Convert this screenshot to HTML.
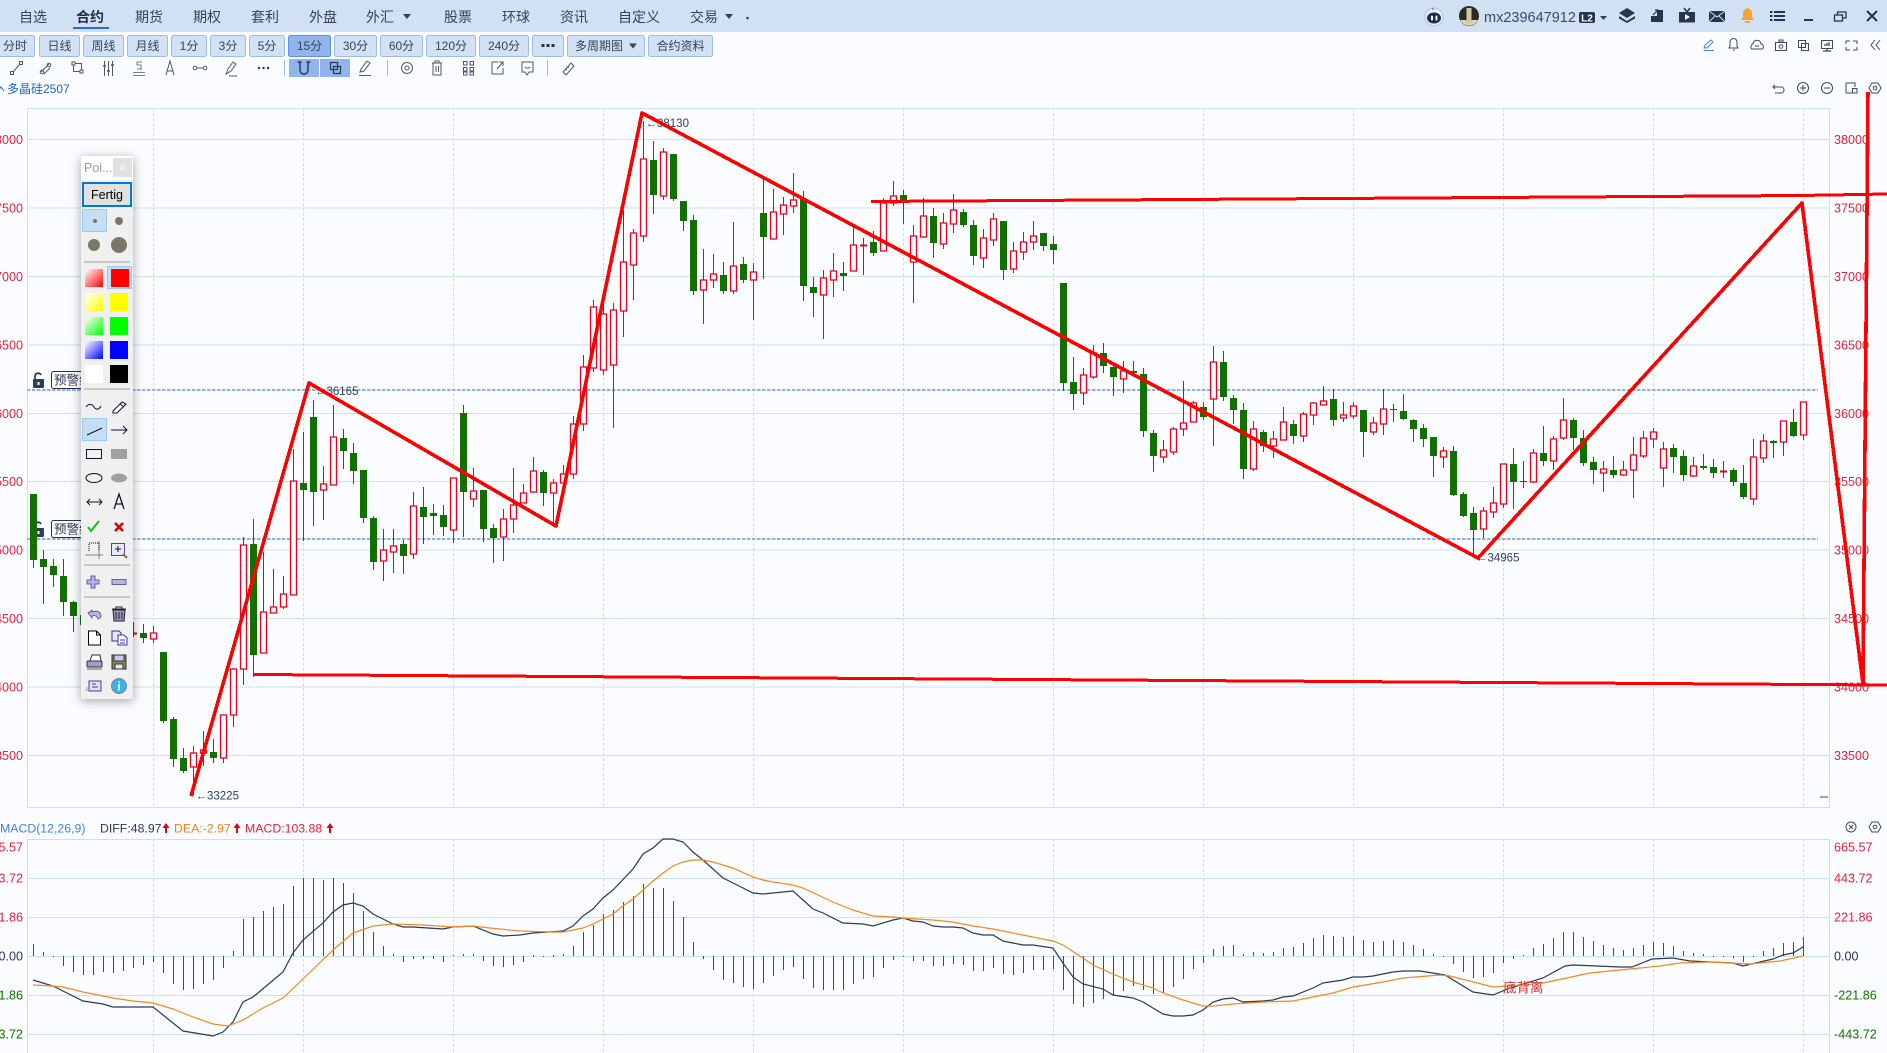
<!DOCTYPE html>
<html>
<head>
<meta charset="utf-8">
<title>Chart</title>
<style>
html,body{margin:0;padding:0;background:#fbfcff;width:1887px;height:1053px;overflow:hidden}
svg{position:absolute;left:0;top:0;display:block}
text{font-family:"Liberation Sans","Noto Sans CJK SC",sans-serif}
#panel{position:absolute;left:81px;top:156px;width:52px;height:543px;background:#f0f0f0;box-shadow:0 2px 10px rgba(0,0,0,.35)}
</style>
</head>
<body>
<svg width="1887" height="1053" viewBox="0 0 1887 1053">
<rect width="1887" height="1053" fill="#fbfcff"/>
<!-- top bar -->
<rect width="1887" height="32" fill="#d1e0f2"/>
<g font-size="14" fill="#34435c">
<text x="19" y="22">自选</text>
<text x="76" y="22" font-weight="bold" fill="#1c2a44">合约</text>
<text x="135" y="22">期货</text>
<text x="193" y="22">期权</text>
<text x="251" y="22">套利</text>
<text x="309" y="22">外盘</text>
<text x="366" y="22">外汇</text>
<text x="444" y="22">股票</text>
<text x="502" y="22">环球</text>
<text x="560" y="22">资讯</text>
<text x="618" y="22">自定义</text>
<text x="690" y="22">交易</text>
</g>
<rect x="73" y="27" width="36" height="2" fill="#2a6fd8"/>
<path d="M403 14h8l-4 5zM725 14h8l-4 5z" fill="#34435c"/>
<circle cx="747.500" cy="18" r="1.300" fill="#34435c"/>
<!-- period buttons -->
<g fill="#d2e1f3" stroke="#9dbce8">
<rect x="-5.500" y="35.500" width="40" height="21" rx="2"/>
<rect x="39.500" y="35.500" width="40" height="21" rx="2"/>
<rect x="83.500" y="35.500" width="40" height="21" rx="2"/>
<rect x="127.500" y="35.500" width="40" height="21" rx="2"/>
<rect x="171.500" y="35.500" width="35" height="21" rx="2"/>
<rect x="210.500" y="35.500" width="35" height="21" rx="2"/>
<rect x="249.500" y="35.500" width="35" height="21" rx="2"/>
<rect x="288.500" y="35.500" width="42" height="21" rx="2" fill="#8fb5ec" stroke="#5e92e0"/>
<rect x="334.500" y="35.500" width="42" height="21" rx="2"/>
<rect x="380.500" y="35.500" width="42" height="21" rx="2"/>
<rect x="426.500" y="35.500" width="49" height="21" rx="2"/>
<rect x="479.500" y="35.500" width="49" height="21" rx="2"/>
<rect x="532.500" y="35.500" width="31" height="21" rx="2"/>
<rect x="567.500" y="35.500" width="77" height="21" rx="2"/>
<rect x="648.500" y="35.500" width="64" height="21" rx="2"/>
</g>
<g font-size="12" fill="#34435c" text-anchor="middle">
<text x="15" y="50">分时</text>
<text x="59.500" y="50">日线</text>
<text x="103.500" y="50">周线</text>
<text x="147.500" y="50">月线</text>
<text x="189" y="50">1分</text>
<text x="228" y="50">3分</text>
<text x="267" y="50">5分</text>
<text x="309.500" y="50">15分</text>
<text x="355.500" y="50">30分</text>
<text x="401.500" y="50">60分</text>
<text x="451" y="50">120分</text>
<text x="504" y="50">240分</text>
<text x="599" y="50">多周期图</text>
<text x="680.500" y="50">合约资料</text>
</g>
<path d="M541.500 44h3v3h-3zM546.500 44h3v3h-3zM551.500 44h3v3h-3z" fill="#26344f"/>
<path d="M629 43.500h8l-4 5z" fill="#34435c"/>
<!-- toolbar icons row -->
<g fill="none" stroke="#4a5870" stroke-width="1">
<path d="M13 72L20 64"/><rect x="10.500" y="71.500" width="3" height="3"/><rect x="19.500" y="61.500" width="3" height="3"/>
<path d="M41 72L49 64M44 74L50 68"/><circle cx="42" cy="72" r="1.800"/><circle cx="49" cy="65" r="1.800"/>
<rect x="73.500" y="63.500" width="8" height="8"/><rect x="72" y="62" width="3" height="3" fill="#fbfcff"/><rect x="80" y="70" width="3" height="3" fill="#fbfcff"/>
<path d="M104.500 61v15M108.500 61v15M112.500 61v15"/><path d="M103 66h3M107 71h3M111 65h3" stroke-width="1.600"/>
<path d="M133 75.500h12M133 72.500h12M137 62h5M137 69h5M137 62v3h4v4" stroke-width=".8"/>
<path d="M166 75l4-14 4 14M167.500 71h5"/>
<path d="M194 68h12"/><circle cx="195" cy="68" r="1.800" fill="#fbfcff"/><circle cx="205" cy="68" r="1.800" fill="#fbfcff"/>
<path d="M226 74l2-5 5-7 3 2-5 7zM229 76h8"/>
</g>
<g fill="#26344f"><circle cx="259" cy="68" r="1.200"/><circle cx="263.500" cy="68" r="1.200"/><circle cx="268" cy="68" r="1.200"/></g>
<path d="M284.500 60v16M387.500 60v16M547.500 60v16" stroke="#9dbce8"/>
<rect x="289" y="59" width="30" height="18" fill="#8fb5ec"/>
<rect x="320" y="59" width="30" height="18" fill="#8fb5ec"/>
<g fill="none" stroke="#27364f" stroke-width="1.200">
<path d="M300 62v8a4 4 0 0 0 8 0v-8M297.500 62h4M306.500 62h4" stroke-width="1.400"/>
<rect x="330.500" y="62.500" width="7" height="7"/><rect x="333.500" y="66.500" width="7" height="7"/>
</g>
<g fill="none" stroke="#4a5870" stroke-width="1">
<path d="M360 72l1-3 6-8 3 2-6 8zM359 75.500h12"/>
<circle cx="407" cy="68" r="5.500"/><circle cx="407" cy="68" r="2"/>
<path d="M432 63h10M435 63v-2h4v2M433 63v12h8V63M436 66v6M438.500 66v6"/>
<rect x="463.500" y="61.500" width="3.500" height="3.500"/><rect x="470" y="61.500" width="3.500" height="3.500"/><rect x="463.500" y="67.500" width="3.500" height="3.500"/><rect x="470" y="67.500" width="3.500" height="3.500"/><rect x="463.500" y="72" width="3.500" height="3"/><rect x="470" y="72" width="3.500" height="3"/>
<path d="M498 62h-6v12h11v-6M497 69l6-7M499 62h4v4"/>
<path d="M522 62h11v10h-4l-2 3-2-3h-3zM525 67c1 1.500 4 1.500 5 0"/>
<path d="M563 72l8-9 3 3-8 9zM566 69l1 1M568 67l1 1"/>
</g>
<text x="7" y="93" font-size="12" fill="#1667d0">多晶硅2507</text>
<path d="M-2 91l3-4 3 4" fill="none" stroke="#1667d0"/>
<!-- top right -->
<circle cx="1434" cy="17" r="9" fill="#e8ecf6" stroke="#b8bfd4"/><ellipse cx="1434" cy="18" rx="7" ry="5.500" fill="#1f2a5a"/><rect x="1431" y="15.500" width="2" height="5" rx="1" fill="#fff"/><rect x="1435.500" y="15.500" width="2" height="5" rx="1" fill="#fff"/>
<path d="M1432 8l2 2" stroke="#6a7088" fill="none"/>
<circle cx="1469" cy="16" r="10" fill="#2a2a24"/>
<path d="M1460 20a10 10 0 0 0 18 0z" fill="#d9d6b8"/><rect x="1466.500" y="8" width="5" height="15" fill="#cfc9a0"/>
<text x="1484" y="22" font-size="14.500" fill="#3a4a63">mx239647912</text>
<rect x="1579" y="12" width="16" height="11" rx="2" fill="#26344f"/>
<text x="1587" y="21.500" font-size="10" font-weight="bold" fill="#fff" text-anchor="middle">L2</text>
<path d="M1600 16h7l-3.500 4z" fill="#34435c"/>
<path d="M1627 8l8 5-8 5-8-5z" fill="#26344f"/><path d="M1619 16l8 5 8-5v2.500l-8 4.500-8-4.500z" fill="#26344f"/>
<path d="M1651 10h12v12h-12v-6h2v-6z" fill="#26344f"/><rect x="1651" y="10" width="6" height="6" fill="#d1e0f2"/><path d="M1653 15l5-5M1655 10h3v3" stroke="#26344f" fill="none" stroke-width="1.200"/><rect x="1658" y="12" width="3" height="3" fill="#26344f"/>
<rect x="1679" y="12" width="16" height="10.500" fill="#26344f"/><path d="M1684 8l3 4M1690 8l-3 4" stroke="#26344f" stroke-width="1.500"/><path d="M1685 14l5 3-5 3z" fill="#fff"/>
<rect x="1709" y="11" width="16" height="11" fill="#26344f"/><path d="M1709 11l8 6 8-6M1709 22l6-6M1725 22l-6-6" stroke="#d1e0f2" fill="none"/>
<path d="M1741 20h13l-2-3v-4a4.500 4.500 0 0 0-9 0v4z" fill="#f5a431"/><rect x="1745" y="21" width="5" height="2" fill="#f5a431"/><rect x="1746.500" y="8" width="2" height="2" fill="#f5a431"/>
<path d="M1770 12h2.500M1774 12h11M1770 16h2.500M1774 16h11M1770 20h2.500M1774 20h11" stroke="#26344f" stroke-width="2" fill="none"/>
<rect x="1804" y="19" width="9" height="2" fill="#26344f"/>
<g fill="none" stroke="#26344f" stroke-width="1.300"><rect x="1834.500" y="15" width="8" height="6"/><path d="M1837.500 14.500v-2.500h8.500v6h-3"/></g>
<path d="M1867 11l10 10M1877 11l-10 10" stroke="#26344f" stroke-width="2"/>
<!-- second row right icons -->
<g fill="none" stroke="#3b4a63" stroke-width="1">
<path d="M1704 48l1-3 6-5 2 2-6 6zM1704 50.500h10" stroke="#3a86e8"/>
<path d="M1729 48h9l-1-2v-4a3.500 3.500 0 0 0-7 0v4zM1733 50h2"/>
<path d="M1752 49h10c2 0 2-5-1-5 0-5-8-5-8 0-2 0-3 5-1 5zM1755 46h4"/>
<rect x="1775.500" y="42.500" width="11" height="8"/><rect x="1779" y="40" width="4" height="2"/><circle cx="1781" cy="46.500" r="1.800"/>
<rect x="1798.500" y="40.500" width="7" height="7"/><rect x="1801.500" y="43.500" width="7" height="7"/>
<rect x="1821.500" y="40.500" width="11" height="8"/><path d="M1827 48.500v2M1823 51h8M1825 46v-2M1827 46v-3M1829 46v-4" stroke-width="1.300"/>
<path d="M1846 44v-3h4M1853 41h4v3M1846 47v3h4M1853 50h4v-3"/>
<path d="M1875 40l-4 5 4 5M1880 40l-4 5 4 5"/>
<path d="M1775 85l-2 2 2 2M1773 87h8c4 0 4 6 0 6h-6"/>
<circle cx="1803" cy="88" r="5.500"/><path d="M1800 88h6M1803 85v6"/>
<circle cx="1827" cy="88" r="5.500"/><path d="M1824 88h6"/>
<path d="M1855 93h-9V83h9v4"/><rect x="1852.500" y="88.500" width="4.500" height="4.500"/>
<path d="M1872 83h6l3 5-3 5h-6l-3-5z"/><circle cx="1875" cy="88" r="1.800"/>
<circle cx="1851" cy="827" r="5"/><path d="M1849 825l4 4M1853 825l-4 4"/>
<path d="M1872 822h6l3 5-3 5h-6l-3-5z"/><circle cx="1875" cy="827" r="1.800"/>
</g>
<!-- grid -->
<g stroke="#cfdff2" fill="none">
<path d="M27 108.500H1830M27 139.500H1829M27 208H1829M27 276.500H1829M27 345H1829M27 413.500H1829M27 481.500H1829M27 550H1829M27 618.500H1829M27 687H1829M27 755.500H1829M27 807.500H1830M27 839.500H1830M27 878.500H1829M27 917.500H1829M27 995.500H1829M27 1034.500H1829"/>
<path d="M27 956.500H1829"/>
<path d="M27.500 108V807M1829.500 108V807M27.500 839V1053M1829.500 839V1053"/>
<path d="M153.500 108V807M303.500 108V807M453.500 108V807M603.500 108V807M753.500 108V807M903.500 108V807M1053.500 108V807M1203.500 108V807M1353.500 108V807M1503.500 108V807M1653.500 108V807M1803.500 108V807M153.500 839V1053M303.500 839V1053M453.500 839V1053M603.500 839V1053M753.500 839V1053M903.500 839V1053M1053.500 839V1053M1203.500 839V1053M1353.500 839V1053M1503.500 839V1053M1653.500 839V1053M1803.500 839V1053" stroke-dasharray="3 2"/>
</g>
<!-- alert lines -->
<path d="M27 390H1818M27 539H1818" stroke="#8db2ea" stroke-width="2" stroke-dasharray="3.500 1.500" fill="none"/>
<!-- lock tags -->
<g fill="#2c3e5a">
<rect x="33" y="379" width="11" height="9" rx="1"/><path d="M35 379v-3a3.200 3.200 0 0 1 6 -1" fill="none" stroke="#2c3e5a" stroke-width="1.800"/><rect x="37.500" y="382" width="2" height="3" fill="#fbfcff"/>
<rect x="33" y="528" width="11" height="9" rx="1"/><path d="M35 528v-3a3.200 3.200 0 0 1 6 -1" fill="none" stroke="#2c3e5a" stroke-width="1.800"/><rect x="37.500" y="531" width="2" height="3" fill="#fbfcff"/>
</g>
<rect x="51.500" y="371.500" width="40" height="17" rx="2" fill="#fff" stroke="#26344f"/>
<rect x="51.500" y="520.500" width="40" height="17" rx="2" fill="#fff" stroke="#26344f"/>
<text x="54" y="384.500" font-size="12.500" fill="#26344f">预警线</text>
<text x="54" y="533.500" font-size="12.500" fill="#26344f">预警线</text>
<!-- axis labels -->
<g font-size="12.600" fill="#e6213d" text-anchor="end">
<text x="23" y="144">38000</text><text x="23" y="212.500">37500</text><text x="23" y="281">37000</text><text x="23" y="349.500">36500</text><text x="23" y="418">36000</text><text x="23" y="486">35500</text><text x="23" y="554.500">35000</text><text x="23" y="623">34500</text><text x="23" y="691.500">34000</text><text x="23" y="760">33500</text>
<text x="23" y="851.500">665.57</text><text x="23" y="882.500">443.72</text><text x="23" y="921.500">221.86</text>
<text x="23" y="960.500" fill="#26344f">0.00</text>
<text x="23" y="999.500" fill="#127000">-221.86</text><text x="23" y="1038.500" fill="#127000">-443.72</text>
</g>
<g font-size="12.600" fill="#e6213d">
<text x="1834" y="144">38000</text><text x="1834" y="212.500">37500</text><text x="1834" y="281">37000</text><text x="1834" y="349.500">36500</text><text x="1834" y="418">36000</text><text x="1834" y="486">35500</text><text x="1834" y="554.500">35000</text><text x="1834" y="623">34500</text><text x="1834" y="691.500">34000</text><text x="1834" y="760">33500</text>
<text x="1834" y="851.500">665.57</text><text x="1834" y="882.500">443.72</text><text x="1834" y="921.500">221.86</text>
<text x="1834" y="960.500" fill="#26344f">0.00</text>
<text x="1834" y="999.500" fill="#127000">-221.86</text><text x="1834" y="1038.500" fill="#127000">-443.72</text>
</g>
<path d="M1820 797h8" stroke="#127000"/>
<!-- candles -->
<g shape-rendering="crispEdges" fill="none">
<path stroke="#127000" d="M33.500 494V568M43.500 550V604M53.500 559V587M63.500 559V616M73.500 601V632M83.500 610V632M143.500 624V643M163.500 652V723M173.500 717V767M183.500 748V773M213.500 739V763M253.500 519V677M303.500 432V541M313.500 400V526M343.500 429V469M353.500 443V484M363.500 470V523M373.500 516V570M403.500 540V574M423.500 487V544M433.500 504V535M443.500 505V536M463.500 405V537M483.500 490V542M493.500 524V563M543.500 470V506M653.500 141V214M673.500 154V201M683.500 201V231M693.500 215V295M723.500 262V294M743.500 257V283M763.500 178V279M803.500 191V301M813.500 277V317M843.500 262V291M873.500 231V256M903.500 190V224M933.500 208V258M963.500 209V227M973.500 220V265M1003.500 221V280M1043.500 233V251M1053.500 236V264M1063.500 283V391M1073.500 357V410M1103.500 343V373M1113.500 363V396M1133.500 361V373M1143.500 368V437M1153.500 430V472M1203.500 402V420M1223.500 351V401M1233.500 395V424M1243.500 403V479M1263.500 430V452M1293.500 420V444M1333.500 389V426M1363.500 410V457M1393.500 404V422M1403.500 394V420M1413.500 419V442M1423.500 424V447M1433.500 437V477M1453.500 446V496M1463.500 492V517M1473.500 507V555M1513.500 448V509M1523.500 461V488M1543.500 426V466M1573.500 418V450M1583.500 430V466M1593.500 457V484M1613.500 456V478M1673.500 444V473M1683.500 450V481M1703.500 454V470M1713.500 459V478M1733.500 468V486M1743.500 465V499M1773.500 440V458M1793.500 409V437"/>
<path stroke="#127000" stroke-width="7" d="M33.500 494V560M43.500 559V567M53.500 566V575M63.500 576V602M73.500 602V616M83.500 615V625M143.500 633V638M163.500 652V721M173.500 719V759M183.500 758V771M213.500 752V758M253.500 544V655M303.500 483V490M313.500 417V492M343.500 438V451M353.500 453V471M363.500 470V518M373.500 518V562M403.500 544V556M423.500 507V517M433.500 513V516M443.500 515V527M463.500 413V492M483.500 490V529M493.500 528V538M543.500 472V493M653.500 160V195M673.500 154V199M683.500 201V221M693.500 220V291M723.500 275V291M743.500 264V280M763.500 213V237M803.500 199V286M813.500 287V293M843.500 273V276M873.500 242V253M903.500 195V200M933.500 216V243M963.500 212V225M973.500 225V256M1003.500 221V270M1043.500 233V246M1053.500 244V250M1063.500 283V383M1073.500 382V394M1103.500 353V366M1113.500 367V377M1133.500 371V373M1143.500 374V431M1153.500 433V456M1203.500 407V417M1223.500 362V397M1233.500 398V410M1243.500 410V469M1263.500 432V446M1293.500 424V436M1333.500 399V420M1363.500 410V432M1393.500 409V410M1403.500 411V419M1413.500 420V429M1423.500 428V439M1433.500 437V456M1453.500 451V495M1463.500 494V516M1473.500 513V530M1513.500 464V482M1523.500 481V482M1543.500 453V461M1573.500 420V438M1583.500 438V463M1593.500 462V470M1613.500 470V475M1673.500 448V457M1683.500 456V475M1703.500 466V468M1713.500 467V473M1733.500 470V482M1743.500 483V497M1773.500 441V443M1793.500 422V436"/>
<path stroke="#e6001e" d="M133.500 622V637M153.500 626V643M193.500 746V795M203.500 731V766M223.500 715V763M233.500 668V727M243.500 537V685M263.500 552V653M273.500 569V613M283.500 576V609M293.500 449V595M323.500 466V520M333.500 405V485M383.500 529V581M393.500 529V573M413.500 492V559M453.500 478V543M473.500 468V507M503.500 509V561M513.500 468V533M523.500 484V503M533.500 457V493M553.500 479V525M563.500 465V488M573.500 416V479M583.500 355V431M593.500 300V372M603.500 305V375M613.500 303V428M623.500 210V337M633.500 229V300M643.500 121V242M663.500 148V200M703.500 249V324M713.500 254V288M733.500 222V294M753.500 263V320M773.500 189V239M783.500 197V235M793.500 173V213M823.500 270V339M833.500 253V297M853.500 225V271M863.500 238V275M883.500 198V251M893.500 181V206M913.500 225V303M923.500 198V238M943.500 213V249M953.500 194V233M983.500 229V268M993.500 213V246M1013.500 242V273M1023.500 232V260M1033.500 221V250M1083.500 368V405M1093.500 345V379M1123.500 361V393M1163.500 440V463M1173.500 427V455M1183.500 381V436M1193.500 401V422M1213.500 346V446M1253.500 421V471M1273.500 431V458M1283.500 407V440M1303.500 412V442M1313.500 402V425M1323.500 386V405M1343.500 402V422M1353.500 402V419M1373.500 417V435M1383.500 389V435M1443.500 447V468M1483.500 507V538M1493.500 487V518M1503.500 464V508M1533.500 449V483M1553.500 436V470M1563.500 398V440M1603.500 461V492M1623.500 461V476M1633.500 437V498M1643.500 431V458M1653.500 428V448M1663.500 442V487M1693.500 457V477M1723.500 461V478M1753.500 439V505M1763.500 434V463M1783.500 421V456M1803.500 402V440"/>
<path stroke="#e6001e" d="M130 633.500h7M860 245.500h7M1720 471.500h7" stroke-width="2"/>
<path stroke="#e6001e" stroke-width="1.300" fill="#fbfcff" shape-rendering="auto" d="M150.500 633h6V639h-6zM190.500 753h6V767h-6zM200.500 750h6V753h-6zM220.500 715h6V758h-6zM230.500 669h6V715h-6zM240.500 545h6V669h-6zM260.500 612h6V653h-6zM270.500 607h6V613h-6zM280.500 594h6V607h-6zM290.500 481h6V595h-6zM320.500 484h6V490h-6zM330.500 437h6V485h-6zM380.500 550h6V561h-6zM390.500 546h6V552h-6zM410.500 506h6V554h-6zM450.500 478h6V530h-6zM470.500 491h6V499h-6zM500.500 519h6V537h-6zM510.500 505h6V519h-6zM520.500 493h6V503h-6zM530.500 471h6V492h-6zM550.500 483h6V493h-6zM560.500 474h6V483h-6zM570.500 424h6V474h-6zM580.500 367h6V424h-6zM590.500 307h6V368h-6zM600.500 314h6V370h-6zM610.500 310h6V365h-6zM620.500 262h6V311h-6zM630.500 233h6V265h-6zM640.500 159h6V236h-6zM660.500 152h6V196h-6zM700.500 280h6V290h-6zM710.500 274h6V280h-6zM730.500 266h6V291h-6zM750.500 272h6V280h-6zM770.500 212h6V239h-6zM780.500 205h6V214h-6zM790.500 200h6V206h-6zM820.500 278h6V295h-6zM830.500 271h6V280h-6zM850.500 245h6V271h-6zM880.500 203h6V251h-6zM890.500 196h6V203h-6zM910.500 236h6V262h-6zM920.500 216h6V237h-6zM940.500 223h6V244h-6zM950.500 210h6V224h-6zM980.500 238h6V258h-6zM990.500 219h6V240h-6zM1010.500 251h6V269h-6zM1020.500 242h6V252h-6zM1030.500 236h6V242h-6zM1080.500 375h6V393h-6zM1090.500 353h6V377h-6zM1120.500 371h6V379h-6zM1160.500 450h6V457h-6zM1170.500 429h6V452h-6zM1180.500 423h6V429h-6zM1190.500 403h6V422h-6zM1210.500 362h6V399h-6zM1250.500 429h6V469h-6zM1270.500 439h6V446h-6zM1280.500 422h6V440h-6zM1300.500 414h6V436h-6zM1310.500 403h6V415h-6zM1320.500 401h6V405h-6zM1340.500 415h6V418h-6zM1350.500 406h6V416h-6zM1370.500 423h6V432h-6zM1380.500 409h6V424h-6zM1440.500 451h6V457h-6zM1480.500 511h6V529h-6zM1490.500 503h6V512h-6zM1500.500 464h6V504h-6zM1530.500 453h6V482h-6zM1550.500 439h6V461h-6zM1560.500 420h6V438h-6zM1600.500 469h6V473h-6zM1620.500 470h6V475h-6zM1630.500 455h6V470h-6zM1640.500 438h6V456h-6zM1650.500 432h6V439h-6zM1660.500 449h6V468h-6zM1690.500 466h6V476h-6zM1750.500 457h6V499h-6zM1760.500 441h6V458h-6zM1780.500 421h6V442h-6zM1800.500 402h6V435h-6z"/>
</g>
<!-- extreme labels -->
<g font-size="11.500" fill="#2c3e5a">
<text x="195.500" y="799.500">←33225</text>
<text x="315" y="395">←36165</text>
<text x="645.500" y="127">←38130</text>
<text x="1476" y="561.500">←34965</text>
</g>
<!-- MACD histogram -->
<g fill="none" shape-rendering="crispEdges">
<path stroke="#127000" d="M53.500 956V957M63.500 956V966M73.500 956V972M83.500 956V975M93.500 956V975M103.500 956V972M113.500 956V973M123.500 956V971M133.500 956V968M143.500 956V965M153.500 956V962M163.500 956V973M173.500 956V984M183.500 956V990M193.500 956V989M203.500 956V984M213.500 956V980M223.500 956V968M403.500 956V962M413.500 956V959M423.500 956V959M433.500 956V959M443.500 956V962M483.500 956V961M493.500 956V966M503.500 956V967M513.500 956V965M523.500 956V962M533.500 955V957M543.500 956V957M553.500 955V957M703.500 956V959M713.500 956V970M723.500 956V980M733.500 956V983M743.500 956V987M753.500 956V989M763.500 956V983M773.500 956V976M783.500 956V970M793.500 956V967M803.500 956V979M813.500 956V988M823.500 956V990M833.500 956V990M843.500 956V990M853.500 956V984M863.500 956V979M873.500 956V977M883.500 956V968M893.500 956V960M903.500 956V957M913.500 956V961M923.500 956V961M933.500 956V966M943.500 956V966M953.500 956V964M963.500 956V965M973.500 956V971M983.500 956V971M993.500 956V968M1003.500 956V974M1013.500 956V975M1023.500 956V973M1033.500 956V970M1043.500 956V970M1053.500 956V969M1063.500 956V990M1073.500 956V1004M1083.500 956V1007M1093.500 956V1003M1103.500 956V999M1113.500 956V995M1123.500 956V991M1133.500 956V986M1143.500 956V990M1153.500 956V994M1163.500 956V993M1173.500 956V987M1183.500 956V979M1193.500 956V969M1203.500 956V963M1443.500 956V957M1453.500 956V964M1463.500 956V972M1473.500 956V978M1483.500 956V977M1493.500 956V973M1503.500 956V963M1513.500 956V959M1713.500 956V957M1723.500 956V957M1733.500 956V958M1743.500 956V962M1753.500 956V957"/>
<path stroke="#d01020" d="M33.500 956V944M43.500 956V952M233.500 956V951M243.500 956V919M253.500 956V917M263.500 956V911M273.500 956V907M283.500 956V904M293.500 956V886M303.500 956V878M313.500 956V878M323.500 956V880M333.500 956V878M343.500 956V883M353.500 956V893M363.500 956V911M373.500 956V932M383.500 956V946M393.500 956V954M453.500 956V955M463.500 956V954M473.500 956V954M563.500 956V954M573.500 956V946M583.500 956V932M593.500 956V925M603.500 956V914M613.500 956V910M623.500 956V902M633.500 956V896M643.500 956V884M653.500 956V888M663.500 956V888M673.500 956V901M683.500 956V917M693.500 956V942M1213.500 956V949M1223.500 956V946M1233.500 956V945M1243.500 956V954M1253.500 956V952M1263.500 956V953M1273.500 956V952M1283.500 956V948M1293.500 956V947M1303.500 956V943M1313.500 956V938M1323.500 956V935M1333.500 956V936M1343.500 956V937M1353.500 956V936M1363.500 956V940M1373.500 956V942M1383.500 956V941M1393.500 956V940M1403.500 956V942M1413.500 956V945M1423.500 956V949M1433.500 956V954M1523.500 956V955M1533.500 956V948M1543.500 956V944M1553.500 956V938M1563.500 956V932M1573.500 956V932M1583.500 956V937M1593.500 956V941M1603.500 956V945M1613.500 956V948M1623.500 956V950M1633.500 956V948M1643.500 956V945M1653.500 956V942M1663.500 956V943M1673.500 956V946M1683.500 956V951M1693.500 956V953M1703.500 956V954M1763.500 956V951M1773.500 956V948M1783.500 956V943M1793.500 956V942M1803.500 956V937"/>
</g>
<!-- MACD lines -->
<polyline fill="none" stroke="#2b3a55" stroke-width="1.200" points="33,980 53,986 83,1001 103,1004 113,1007 153,1007 183,1031 213,1036 223,1032 233,1022 243,1002 253,997 283,972 293,953 303,940 323,923 333,912 343,905 353,903 363,906 373,914 393,924 403,927 413,927 443,929 453,927 473,926 493,934 503,936 520,935 533,933 563,931 573,926 583,916 593,909 603,898 613,890 633,869 643,854 653,848 663,839 673,839 683,842 693,852 703,860 723,878 743,888 753,893 763,894 793,891 813,909 823,913 843,923 863,924 873,926 893,920 903,918 913,921 923,922 933,926 943,927 953,927 963,928 973,933 983,935 993,935 1003,941 1013,943 1023,945 1033,945 1053,948 1063,963 1073,977 1083,984 1103,989 1113,995 1133,998 1143,1002 1153,1008 1163,1014 1173,1016 1183,1016 1193,1015 1203,1010 1213,1002 1223,999 1233,998 1243,1002 1263,1001 1273,1000 1283,997 1293,996 1313,988 1323,983 1343,980 1353,977 1363,977 1373,976 1383,974 1393,972 1403,971 1420,971 1445,975 1473,992 1493,995 1510,988 1543,978 1565,966 1573,965 1620,967 1632,967 1652,959 1673,958 1690,961 1733,963 1743,966 1773,959 1783,955 1793,953 1803,947"/>
<polyline fill="none" stroke="#f08a24" stroke-width="1.200" points="33,985 53,986 63,987 83,992 113,998 133,1001 153,1003 173,1009 193,1017 213,1024 228,1026 243,1020 263,1008 283,998 303,979 333,950 353,933 373,926 393,924 423,925 453,927 473,926 490,928 520,931 553,932 563,932 573,930 583,928 593,924 603,919 613,914 623,906 633,899 643,890 653,881 663,873 673,866 683,862 693,860 703,860 713,862 733,868 753,877 763,880 773,882 793,885 803,888 833,902 853,910 873,916 893,917 903,918 933,920 953,922 973,926 993,929 1003,931 1033,937 1053,941 1063,945 1083,958 1093,965 1113,974 1133,982 1153,988 1163,993 1183,1000 1193,1003 1203,1006 1213,1006 1233,1004 1263,1002 1293,1001 1303,999 1333,993 1353,987 1383,982 1403,978 1440,975 1450,976 1493,987 1510,986 1543,983 1590,973 1630,969 1660,966 1680,963 1710,962 1750,964 1780,961 1803,956"/>
<text x="1503" y="992.500" font-size="13.500" fill="#e0303a">底背离</text>
<!-- MACD header -->
<g font-size="12.300">
<text x="0" y="832.500" fill="#3f83dc">MACD(12,26,9)</text>
<text x="100" y="832.500" fill="#2b3a55">DIFF:48.97</text>
<text x="174" y="832.500" fill="#f08020">DEA:-2.97</text>
<text x="245" y="832.500" fill="#e6213d">MACD:103.88</text>
</g>
<path d="M166 823l-3.500 5h2.500v5h2v-5h2.500zM237 823l-3.500 5h2.500v5h2v-5h2.500zM330 823l-3.500 5h2.500v5h2v-5h2.500z" fill="#e60012"/>
<!-- red drawn lines -->
<g fill="none" stroke="#ff0000" shape-rendering="crispEdges" stroke-linejoin="round">
<polyline stroke-width="3.600" points="191,796 309,383 556,526 642,113 1478,558 1802,203 1863,684 1868,92"/>
<path stroke-width="3" d="M871 201.500L1800 195.500L1887 194M253 674.500L1887 685"/>
</g>
</svg>

<div id="panel"></div>
<svg width="1887" height="1053" viewBox="0 0 1887 1053" style="pointer-events:none">
<defs>
<linearGradient id="gr" x1="0" y1="0" x2="1" y2="1"><stop offset="0" stop-color="#fff"/><stop offset="1" stop-color="#f00"/></linearGradient>
<linearGradient id="gy" x1="0" y1="0" x2="1" y2="1"><stop offset="0" stop-color="#fff"/><stop offset="1" stop-color="#ff0"/></linearGradient>
<linearGradient id="gg" x1="0" y1="0" x2="1" y2="1"><stop offset="0" stop-color="#fff"/><stop offset="1" stop-color="#0f0"/></linearGradient>
<linearGradient id="gb" x1="0" y1="0" x2="1" y2="1"><stop offset="0" stop-color="#fff"/><stop offset="1" stop-color="#00f"/></linearGradient>
</defs>
<rect x="81" y="156" width="52" height="24" fill="#fff"/>
<text x="84" y="172" font-size="12.500" fill="#999">Poi...</text>
<rect x="113" y="158" width="19" height="19" fill="#e1e1e1"/>
<path d="M120 165l5 5M125 165l-5 5" stroke="#f4f4f4" stroke-width="1.500"/>
<rect x="83" y="183" width="48" height="23" fill="#e1e1e1" stroke="#0078d7" stroke-width="2"/>
<text x="107" y="199" font-size="12.500" fill="#000" text-anchor="middle">Fertig</text>
<rect x="82.500" y="209.500" width="24" height="22" fill="#c4def4" stroke="#99ccee"/>
<g fill="#7a7668"><circle cx="95" cy="221" r="2"/><circle cx="119" cy="221" r="4"/><circle cx="94" cy="245" r="6"/><circle cx="119" cy="245" r="8"/></g>
<path d="M84 262h46M84 389h46M84 565h46M84 597h46" stroke="#a0a0a0"/>
<rect x="107.500" y="266.500" width="24" height="22" fill="#c4def4" stroke="#99ccee"/>
<rect x="85" y="269" width="18" height="18" fill="url(#gr)"/><rect x="111" y="269" width="18" height="18" fill="#f00"/>
<rect x="85" y="293" width="18" height="18" fill="url(#gy)"/><rect x="110" y="293" width="18" height="18" fill="#ff0"/>
<rect x="85" y="317" width="18" height="18" fill="url(#gg)"/><rect x="110" y="317" width="18" height="18" fill="#0f0"/>
<rect x="85" y="341" width="18" height="18" fill="url(#gb)"/><rect x="110" y="341" width="18" height="18" fill="#00f"/>
<rect x="85" y="365" width="18" height="18" fill="#fff"/><rect x="110" y="365" width="18" height="18" fill="#000"/>
<!-- tools -->
<rect x="82.500" y="418.500" width="24" height="22" fill="#c4def4" stroke="#99ccee"/>
<g fill="none" stroke="#101030" stroke-width="1">
<path d="M86 407c3-4 6-3 8 0s5 3 7-1"/>
<path d="M113 411l9-9 4 2-9 9h-4z" fill="#fff"/><path d="M120 404l4 3"/>
<path d="M87 435l15-7"/>
<path d="M111 430h16M123 426l4 4-4 4"/>
<rect x="86.500" y="449.500" width="15" height="9"/>
<rect x="111" y="449" width="16" height="10" fill="#a0a0a0" stroke="none"/>
<ellipse cx="94" cy="478" rx="8" ry="4.500"/>
<ellipse cx="119" cy="478" rx="8" ry="4.500" fill="#a0a0a0" stroke="none"/>
<path d="M87 502h15M90 499l-3 3 3 3M99 499l3 3-3 3"/>
<path d="M114 509l5-15 5 15M116 504h6" stroke-width="1.300"/>
<path d="M88 527l3 4 8-10" stroke="#10c010" stroke-width="2"/>
<path d="M115 523l8 8M123 523l-8 8" stroke="#d80000" stroke-width="2.500"/>
<path d="M85 555h18M99 541v18" stroke="#808080"/><path d="M89 551v-8h10v8" stroke-dasharray="1 1" stroke="#000"/>
<rect x="111.500" y="543.500" width="13" height="12" fill="#e8e8f8" stroke="#505070"/><path d="M115 549h6M118 546v6"/><path d="M123 554l4 4" stroke="#907040" stroke-width="2"/>
</g>
<path d="M91 576h4v4h4v4h-4v4h-4v-4h-4v-4h4z" fill="#b4b4e6" stroke="#6060a0"/>
<rect x="112" y="579.500" width="14" height="5" fill="#b4b4e6" stroke="#6060a0"/>
<path d="M88 613l4-3v2c5-2 9 0 9 4 0 2-2 3-3 3-1-3-3-4-6-3v2z" fill="#b4b4e6" stroke="#505080" stroke-width=".800"/>
<g stroke="#202030"><path d="M112 609h14M116 609v-2h6v2" fill="none"/><path d="M113 610h12l-1 11h-10z" fill="#9a9ab4"/><path d="M116 612v7M119 612v7M122 612v7" fill="none"/></g>
<path d="M88.500 631h8l4 4v10h-12z" fill="#fff" stroke="#000"/><path d="M96.500 631v4h4" fill="none" stroke="#000"/>
<path d="M112 631h7l2 2v8h-9z" fill="#e8e8f8" stroke="#303070"/><path d="M118 635h6l3 3v7h-9z" fill="#fff" stroke="#3030c0"/><path d="M120 640h5M120 643h5" stroke="#3030c0"/>
<rect x="87" y="661" width="15" height="6" rx="1" fill="#a0a0c4" stroke="#303040"/><path d="M90 661l2-6h8l1 6z" fill="#fff" stroke="#303040"/><path d="M87 669h15" stroke="#606070"/>
<rect x="112" y="655" width="14" height="14" fill="#8a8a50" stroke="#303040"/><rect x="114" y="655" width="10" height="6" fill="#c8c8f0" stroke="#303040"/><rect x="115" y="664" width="8" height="5" fill="#e8e8e8" stroke="#303040"/>
<rect x="89" y="681" width="12" height="10" fill="#e0e0f6" stroke="#404080"/><path d="M92 684h4M92 687h6" stroke="#404080"/><path d="M85 690h3M86 688h2" stroke="#a0a0a0"/>
<circle cx="119" cy="686" r="7.500" fill="#35b2f0" stroke="#808080"/>
<text x="119" y="690.500" font-size="12" font-weight="bold" fill="#fff" text-anchor="middle">i</text>
</svg>
</body>
</html>
